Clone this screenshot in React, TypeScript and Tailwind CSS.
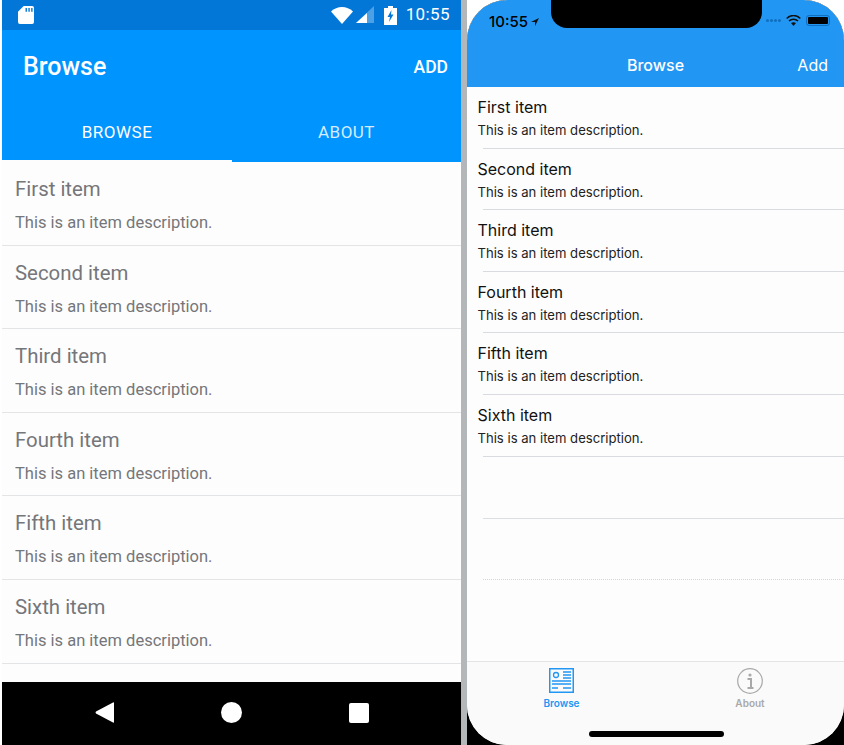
const items = ["First item", "Second item", "Third item", "Fourth item", "Fifth item", "Sixth item"]

const AndroidStatusIcons = () => (
  <>
    <svg width="22" height="17" viewBox="0 0 22 17" className="mr-[3px]">
      <path d="M0 4.500C6-1.500 16-1.500 22 4.500L11 17Z" fill="#fff" />
    </svg>
    <svg width="18" height="18" viewBox="0 0 18 18" className="mr-[10px]">
      <path d="M0 17L18 0V17Z" fill="#fff" fillOpacity="0.3" />
      <path d="M0 17L11 7V17Z" fill="#fff" />
    </svg>
    <svg width="13" height="19" viewBox="0 0 13 19" className="mr-[9px]">
      <path
        d="M4 0H9V2H13V19H0V2H4ZM7.500 4L3.500 11H6L5 16L9.500 8.500H7Z"
        fill="#fff"
        fillRule="evenodd"
      />
    </svg>
  </>
)

const AndroidPhone = () => (
  <div className="flex h-full w-[459px] flex-col bg-[#fdfdfd] font-['Roboto',sans-serif]">
    <div className="flex h-[30px] items-center bg-[#0277d8] pr-[11px] pl-[16px] text-white">
      <svg width="16" height="18" viewBox="0 0 17 19">
        <path
          d="M6 0H15Q17 0 17 2V17Q17 19 15 19H2Q0 19 0 17V6ZM8 2V6H9.500V2ZM11 2V6H12.500V2ZM14 2V6H15.500V2Z"
          fill="#fff"
          fillRule="evenodd"
        />
      </svg>
      <div className="flex-1" />
      <AndroidStatusIcons />
      <span className="text-[17px] tracking-[0.4px]">10:55</span>
    </div>
    <div className="flex h-[72px] items-center justify-between bg-[#0094ff] pt-[2px] pr-[13px] pl-[21px] text-white">
      <span className="text-[25px] font-medium">Browse</span>
      <span className="text-[17.500px] font-medium">ADD</span>
    </div>
    <div className="flex h-[60px] bg-[#0094ff] text-[17px] tracking-[0.5px]">
      <div className="flex w-[230px] items-center justify-center border-b-2 border-[#fdfdfd] pt-[3px] text-white">
        BROWSE
      </div>
      <div className="flex flex-1 items-center justify-center pt-[3px] pb-[2px] text-[#d3ecff]">
        ABOUT
      </div>
    </div>
    <div className="flex-1">
      {items.map((item) => (
        <div
          key={item}
          className="h-[83.6px] border-b border-[#e3e4e5] pt-[14px] pl-[13px] text-[#75767a]"
        >
          <div className="text-[20.400px] leading-[26px]">{item}</div>
          <div className="mt-[11px] text-[16.500px] leading-[20px]">This is an item description.</div>
        </div>
      ))}
    </div>
    <div className="flex h-[63px] items-center bg-black pb-[2px] pl-[93px]">
      <svg width="19" height="21" viewBox="0 0 19 21">
        <path d="M19 1V20Q19 21 18 20.500L1 11.500Q0 10.500 1 9.500L18 .5Q19 0 19 1Z" fill="#fff" />
      </svg>
      <div className="ml-[107px] h-[21px] w-[21px] rounded-full bg-white" />
      <div className="ml-[107px] h-[20px] w-[20px] rounded-[2px] bg-white" />
    </div>
  </div>
)

const BrowseIcon = () => (
  <svg width="25" height="25" viewBox="0 0 25 25" fill="none" stroke="#2196f3">
    <rect x="0.750" y="0.750" width="23.500" height="23.500" strokeWidth="1.500" />
    <circle cx="7" cy="7" r="2.500" strokeWidth="1.300" />
    <path d="M14 4H22M14 7H22M14 10H22M3 13H22M3 16H22M3 20H9M14 20H22" strokeWidth="1.400" />
  </svg>
)

const AboutIcon = () => (
  <svg width="26" height="26" viewBox="0 0 26 26" fill="none" stroke="#a9a9a9">
    <circle cx="13" cy="13" r="12.300" strokeWidth="1.200" />
    <circle cx="13" cy="7" r="1.600" fill="#a9a9a9" stroke="none" />
    <path d="M10.500 11H14V19M10.500 20H16.500" strokeWidth="2" />
  </svg>
)

const IosPhone = () => (
  <div className="relative h-full flex-1 overflow-hidden rounded-t-[40px] bg-black font-['Inter',sans-serif]">
    <div className="flex h-full flex-col overflow-hidden rounded-[40px] bg-[#fdfdfd]">
      <div className="h-[87px] bg-[#2196f3]">
        <div className="flex h-[44px] items-start justify-between pt-[13px] pr-[14px] pl-[22px]">
          <div className="flex items-center gap-[3px] text-[15px] leading-[18px] font-medium text-black">
            10:55
            <svg width="8" height="8" viewBox="0 0 8 8">
              <path d="M8 0L0 4H4V8Z" fill="#111" />
            </svg>
          </div>
          <div className="flex items-center pt-[2px]">
            <div className="mr-[5px] flex gap-[1px]">
              {[0, 1, 2, 3].map((dot) => (
                <div key={dot} className="h-[3px] w-[3px] rounded-full bg-[#0f6fc0]" />
              ))}
            </div>
            <svg width="15" height="11" viewBox="0 0 15 11" fill="none" stroke="#111" className="mr-[5px]">
              <path d="M.7 3.500C4.500-.5 10.500-.5 14.300 3.500M3 6C5.500 3.500 9.500 3.500 12 6" strokeWidth="1.500" />
              <path d="M5 8Q7.500 6.300 10 8L7.500 11Z" fill="#111" stroke="none" />
            </svg>
            <div className="flex h-[11px] w-[24px] items-center justify-center rounded-[3px] border border-[#0f6fc0]">
              <div className="h-[7px] w-[20px] rounded-[1px] bg-black" />
            </div>
          </div>
        </div>
        <div className="relative flex h-[43px] items-center justify-center pb-[2px] text-[16px] font-medium text-white">
          Browse
          <span className="absolute right-[16px] font-normal">Add</span>
        </div>
      </div>
      <div className="flex-1">
        {items.map((item) => (
          <div key={item} className="h-[61.6px] pl-[10.500px]">
            <div className="pt-[10px] text-[16px] leading-[20px] text-[#111]">{item}</div>
            <div className="mt-[5px] text-[13.100px] leading-[16px] text-[#222]">
              This is an item description.
            </div>
            <div className="mt-[9.600px] ml-[5.500px] border-b border-[#d8dce0]" />
          </div>
        ))}
        <div className="ml-[16px] h-[62px] border-b border-[#dcdfe2]" />
        <div className="ml-[16px] h-[61.6px] border-b border-dotted border-[#d4d6d8]" />
      </div>
      <div className="flex h-[84px] border-t border-[#e4e4e4] bg-[#fafafa] pt-[6px] text-[10px] font-semibold">
        <div className="flex w-[188px] flex-col items-center pl-[1px] text-[#2196f3]">
          <BrowseIcon />
          <span className="mt-[3px] leading-[14px]">Browse</span>
        </div>
        <div className="flex flex-1 flex-col items-center pl-[1px] text-[#a9a9a9]">
          <AboutIcon />
          <span className="mt-[2px] leading-[14px]">About</span>
        </div>
      </div>
    </div>
    <div className="absolute top-0 left-[84px] h-[28px] w-[211px] rounded-b-[16px] bg-black" />
    <div className="absolute bottom-[8px] left-[122px] h-[6px] w-[135px] rounded-full bg-black" />
  </div>
)

const App = () => {
  return (
    <div className="flex h-[745px] w-[844px] overflow-hidden bg-white">
      <div className="w-[2px] bg-white" />
      <AndroidPhone />
      <div className="h-full w-[6px] bg-[#b4b7b9]" />
      <IosPhone />
    </div>
  )
}

export default App
